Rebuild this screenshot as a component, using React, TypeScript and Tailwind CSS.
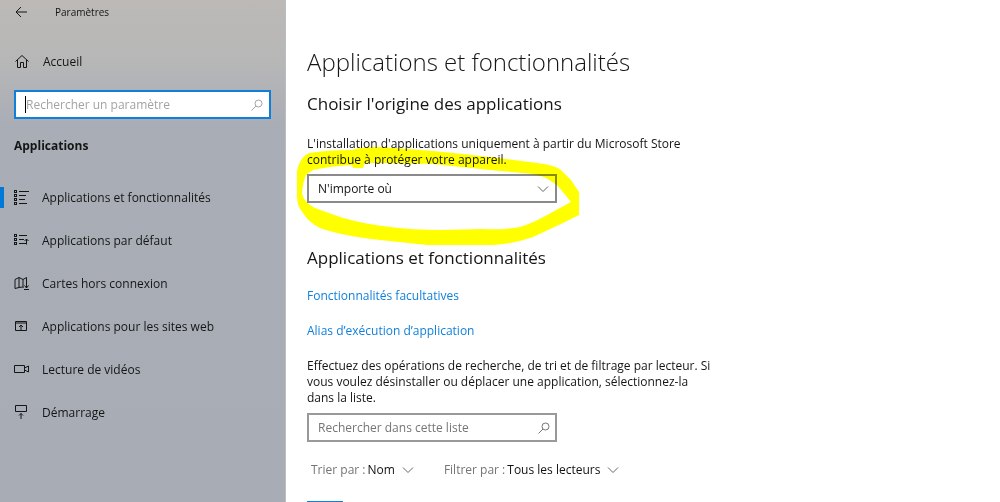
import type { ReactNode } from "react";

const CheckBullet = ({ y }: { y: number }) => (
  <rect x="0.5" y={y} width="2" height="2" />
);

function Icon({ children }: { children: ReactNode }) {
  return (
    <svg
      viewBox="0 0 16 16"
      className="size-4 shrink-0"
      fill="none"
      stroke="currentColor"
      aria-hidden="true"
    >
      {children}
    </svg>
  );
}

const navItems = [
  {
    label: "Applications et fonctionnalités",
    icon: (
      <>
        <CheckBullet y={0.5} />
        <CheckBullet y={4.5} />
        <CheckBullet y={8.5} />
        <CheckBullet y={12.5} />
        <path d="M5 1.5h10M5 5.5h7M5 9.5h6M5 13.5h8" />
      </>
    ),
  },
  {
    label: "Applications par défaut",
    icon: (
      <>
        <CheckBullet y={1.5} />
        <CheckBullet y={5.5} />
        <CheckBullet y={9.5} />
        <path d="M5 2.5h8M5 6.5h5M5 10.5h7M12.5 11.5V6M10.5 8l2-2 2 2" />
      </>
    ),
  },
  {
    label: "Cartes hors connexion",
    icon: (
      <path d="M9.5 11.5 8.5 11 5 11.5 1 12.5v-9l4-2 4 2 3.5-2V12M5 1.5v10M9 3.5v8M10.5 9.5l2 2.5 2-2.5M10 13.5h5" />
    ),
  },
  {
    label: "Applications pour les sites web",
    icon: (
      <path d="M4.5 11.5h-3v-9h11v9h-3M1.5 4h11M7 11V6M5 8l2-2 2 2M4 11.5h6" />
    ),
  },
  {
    label: "Lecture de vidéos",
    icon: <path d="M0.5 3.5h10v7h-10zM10.5 6l4-2v6l-4-2" />,
  },
  {
    label: "Démarrage",
    icon: <path d="M1.5 0.5h11v6h-11zM7 14V8.5M5 10.5l2-2 2 2" />,
  },
];

function Chevron() {
  return (
    <svg
      viewBox="0 0 12 12"
      className="pointer-events-none size-3 shrink-0 text-[#666]"
      fill="none"
      stroke="currentColor"
      aria-hidden="true"
    >
      <path d="M1 3.5l5 5 5-5" />
    </svg>
  );
}

function SearchIcon() {
  return (
    <svg
      viewBox="0 0 12 12"
      className="size-3 shrink-0"
      fill="none"
      stroke="currentColor"
      aria-hidden="true"
    >
      <circle cx="7.5" cy="4.5" r="3.5" />
      <path d="M5 7L0.5 11.5" />
    </svg>
  );
}

function Sidebar() {
  return (
    <aside className="w-[286px] shrink-0 border-r border-[#b8bcc3] bg-[linear-gradient(to_bottom,#bcb9b7_0px,#b7b7b7_60px,#a9adb6_125px,#a8adb5_100%)]">
      <header className="flex h-6 items-center pl-[15px]">
        <button type="button" aria-label="Retour">
          <svg
            viewBox="0 0 12 12"
            className="size-3"
            fill="none"
            stroke="currentColor"
            aria-hidden="true"
          >
            <path d="M12 6H1M6 1L1 6l5 5" />
          </svg>
        </button>
        <span className="pl-7 text-[10px]">Paramètres</span>
      </header>

      <a href="#accueil" className="mt-4 flex h-11 items-center gap-3 pl-[15px]">
        <Icon>
          <path d="M0.5 7.5L7 1.5l6.5 6M2.5 6v7.5h3v-5h3v5h3V6" />
        </Icon>
        Accueil
      </a>

      <label className="mt-1.5 mr-3.5 ml-3.5 flex h-[29px] items-center border-2 border-[#0f7fdc] bg-white pr-1.5 pl-[9px] text-[#a3a3a3]">
        <span className="h-[17px] w-px bg-black" />
        <input
          type="search"
          aria-label="Rechercher un paramètre"
          placeholder="Rechercher un paramètre"
          className="min-w-0 flex-1 text-[#151515] outline-none placeholder:text-[#a3a3a3]"
        />
        <SearchIcon />
      </label>

      <h2 className="mt-[17px] pl-3.5 leading-5 font-bold">Applications</h2>

      <nav className="mt-5">
        {navItems.map((item, i) => (
          <a
            key={item.label}
            href="#"
            aria-current={i === 0 ? "page" : undefined}
            className="flex h-[43px] items-center"
          >
            <span
              className={`h-[21px] w-1 ${i === 0 ? "bg-[#0078d7]" : ""}`}
            />
            <span className="flex items-center gap-3 pl-2.5">
              <Icon>{item.icon}</Icon>
              {item.label}
            </span>
          </a>
        ))}
      </nav>
    </aside>
  );
}

// Marker stroke circled around the drop-down
function Highlight() {
  return (
    <svg
      viewBox="0 0 290 104"
      className="pointer-events-none absolute -top-[30px] -left-[14px] h-[104px] w-[290px] mix-blend-multiply"
      aria-hidden="true"
    >
      <path
        fill="#ff0"
        fillRule="evenodd"
        d="M4 27Q7 13 16 9Q35 6 59 6Q66 3 87 3L140 7L170 10L197 13L244 19Q262 21 268 26L278 36L286 48V71L270 79L240 93Q220 100 200 101H134L87 96Q50 92 27 84Q15 78 10 69Q4 62 4 53ZM9 49Q10 38 13 31L20 26Q38 22 59 21L60 24H70L72 19H97L140 20L197 26L230 29Q245 30 253 34L264 41L278 58L254 71Q240 79 227 83Q210 86 190 85L147 86Q120 86 97 83Q70 80 47 73L22 64Q10 58 9 49Z"
      />
    </svg>
  );
}

function FilterSelect({ label, value }: { label: string; value: string }) {
  return (
    <label className="flex items-center gap-0.5 text-[#757575]">
      {label}
      <span className="flex items-center gap-[7px]">
        <select className="field-sizing-content appearance-none text-[#111] outline-none">
          <option>{value}</option>
        </select>
        <Chevron />
      </span>
    </label>
  );
}

export default function App() {
  return (
    <div className="flex h-screen overflow-hidden bg-white font-['Open_Sans','Noto_Sans',sans-serif] text-[12px] text-[#151515]">
      <Sidebar />

      <main className="min-w-0 flex-1 pt-11 pl-[21px]">
        <h1 className="text-[24px] leading-9 font-light">
          Applications et fonctionnalités
        </h1>

        <section className="mt-3">
          <h2 className="text-[17px] leading-6">
            Choisir l'origine des applications
          </h2>
          <p className="mt-5 max-w-[400px] leading-4">
            L'installation d'applications uniquement à partir du Microsoft Store
            contribue à protéger votre appareil.
          </p>
          <div className="relative mt-1.5 w-[250px]">
            <div className="flex h-[29px] items-center border-2 border-[#8a8a8a] pr-1.5">
              <select
                aria-label="Origine des applications"
                className="h-full min-w-0 flex-1 appearance-none pl-[9px] outline-none"
              >
                <option>N'importe où</option>
              </select>
              <Chevron />
            </div>
            <Highlight />
          </div>
        </section>

        <section className="mt-[43px]">
          <h2 className="text-[17px] leading-6">
            Applications et fonctionnalités
          </h2>
          <ul className="mt-4 flex flex-col gap-[15px] leading-5 text-[#0f7fdc]">
            <li>
              <a href="#facultatives">Fonctionnalités facultatives</a>
            </li>
            <li>
              <a href="#alias">Alias d’exécution d’application</a>
            </li>
          </ul>
          <p className="mt-[17px] max-w-[404px] leading-4">
            Effectuez des opérations de recherche, de tri et de filtrage par
            lecteur. Si vous voulez désinstaller ou déplacer une application,
            sélectionnez-la dans la liste.
          </p>
          <label className="mt-[7px] flex h-[29px] w-[250px] items-center border-2 border-[#999] pr-[5px] pl-[9px] text-[#777]">
            <input
              type="search"
              aria-label="Rechercher dans cette liste"
              placeholder="Rechercher dans cette liste"
              className="min-w-0 flex-1 text-[#151515] outline-none placeholder:text-[#757575]"
            />
            <SearchIcon />
          </label>
          <div className="mt-[18px] flex h-5 items-center gap-[30px] pl-1">
            <FilterSelect label="Trier par :" value="Nom" />
            <FilterSelect label="Filtrer par :" value="Tous les lecteurs" />
          </div>
          <div className="mt-[21px] size-9 bg-[#0f7fdc]" />
        </section>
      </main>
    </div>
  );
}
